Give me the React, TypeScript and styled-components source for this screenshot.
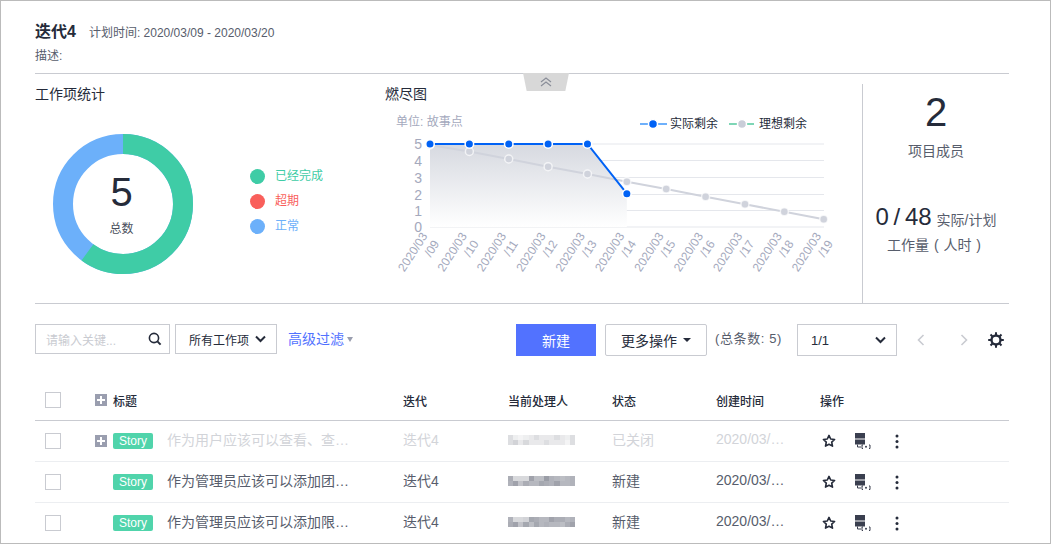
import React from 'react';
import styled, { createGlobalStyle } from 'styled-components';

const GlobalStyle = createGlobalStyle`
  html, body {
    margin: 0;
    padding: 0;
    background: #fff;
    overflow: hidden;
  }
  * {
    box-sizing: border-box;
  }
`;

const FONT = `"Liberation Sans", "Noto Sans CJK SC", sans-serif`;

const Page = styled.div`
  width: 1051px;
  height: 544px;
  overflow: hidden;
  border: 1px solid #bbbbbb;
  padding: 0 41px 0 34px;
  font-family: ${FONT};
  color: #252b3a;
  font-size: 12px;
`;

const Header = styled.header`
  height: 73px;
  padding-top: 20px;
  border-bottom: 1px solid #c9cbd1;
  position: relative;
`;

const TitleRow = styled.div`
  display: flex;
  align-items: baseline;
  gap: 13px;
  height: 22px;
`;

const Title = styled.h1`
  margin: 0;
  font-size: 16px;
  line-height: 22px;
  font-weight: 700;
`;

const Plan = styled.span`
  font-size: 12px;
  color: #575d6c;
`;

const Desc = styled.div`
  margin-top: 5px;
  line-height: 16px;
  color: #575d6c;
`;

const Collapse = styled.div`
  position: absolute;
  left: 488px;
  top: 72px;
  width: 46px;
  height: 18px;
  background: #d8d8d8;
  clip-path: polygon(0 0, 100% 0, 92% 100%, 8% 100%);
  display: flex;
  align-items: center;
  justify-content: center;
`;

const Overview = styled.section`
  display: grid;
  grid-template-columns: 350px 477px 147px;
  height: 230px;
  border-bottom: 1px solid #c9cbd1;
`;

const Panel = styled.div`
  padding-top: 11px;
`;

const PanelTitle = styled.h2`
  margin: 0;
  font-size: 14px;
  line-height: 18px;
  font-weight: 400;
`;

const StatRow = styled.div`
  display: flex;
  align-items: center;
  margin-top: 31px;
  padding-left: 18px;
`;

const Donut = styled.div`
  position: relative;
  width: 140px;
  height: 140px;
`;

const DonutCenter = styled.div`
  position: absolute;
  inset: 0;
  display: flex;
  flex-direction: column;
  align-items: center;
  padding: 38px 3px 0 0;
`;

const DonutValue = styled.div`
  font-size: 40px;
  line-height: 40px;
`;

const DonutLabel = styled.div`
  font-size: 12px;
  line-height: 16px;
  margin-top: 9px;
  color: #4a4f5c;
`;

const Legend = styled.ul`
  list-style: none;
  margin: 0 0 6px 57px;
  padding: 0;
  display: flex;
  flex-direction: column;
  gap: 9px;
`;

const LegendItem = styled.li<{ $color: string }>`
  display: flex;
  align-items: center;
  gap: 10px;
  height: 16px;
  line-height: 16px;
  color: ${(p) => p.$color};

  &::before {
    content: '';
    width: 15px;
    height: 15px;
    border-radius: 50%;
    background: ${(p) => p.$color};
  }
`;

const DrawingSvg = styled.svg`
  display: block;
`;

const Summary = styled.div`
  margin-top: 10px;
  border-left: 1px solid #c9cbd1;
  display: flex;
  flex-direction: column;
  align-items: center;
  text-align: center;
  padding-top: 5px;
`;

const BigNumber = styled.div`
  font-size: 40px;
  line-height: 46px;
`;

const SummaryLabel = styled.div`
  font-size: 14px;
  line-height: 18px;
  margin-top: 7px;
  color: #575d6c;
`;

const Effort = styled.div`
  margin-top: 43px;
  display: flex;
  align-items: baseline;
  gap: 5px;
  font-size: 14px;
  line-height: 28px;
  color: #575d6c;
`;

const EffortValue = styled.span`
  font-size: 24px;
  word-spacing: -2px;
  color: #252b3a;
`;

const EffortLabel = styled.div`
  margin: 2px 4px 0 0;
  font-size: 14px;
  line-height: 18px;
  word-spacing: 1px;
  color: #575d6c;
`;

const Toolbar = styled.div`
  display: flex;
  align-items: flex-start;
  margin-top: 20px;
  height: 32px;
  padding-right: 5px;
`;

const SearchBox = styled.div`
  width: 135px;
  height: 30px;
  border: 1px solid #c9cbd1;
  display: flex;
  align-items: center;
  justify-content: space-between;
  padding: 0 7px 0 10px;
  color: #c9cbd1;
  margin-right: 5px;
`;

const SelectBox = styled.div<{ $width: number; $height: number; $size: number }>`
  width: ${(p) => p.$width}px;
  height: ${(p) => p.$height}px;
  border: 1px solid #c9cbd1;
  display: flex;
  align-items: center;
  justify-content: space-between;
  padding: 0 10px 0 13px;
  font-size: ${(p) => p.$size}px;
  color: #252b3a;
`;

const FilterLink = styled.span`
  margin-left: 11px;
  font-size: 14px;
  line-height: 30px;
  color: #5272ff;
  display: flex;
  align-items: center;
  gap: 3px;

  &::after {
    content: '';
    border: 3.5px solid transparent;
    border-top: 5px solid #9a9eaf;
    border-bottom: 0;
  }
`;

const Spacer = styled.div`
  flex: 1;
`;

const PrimaryButton = styled.button`
  width: 80px;
  height: 32px;
  border: 0;
  padding: 0;
  background: #5272ff;
  color: #fff;
  font: 14px ${FONT};
`;

const MoreButton = styled.button`
  width: 102px;
  height: 32px;
  margin-left: 9px;
  padding: 0;
  border: 1px solid #c9cbd1;
  border-radius: 2px;
  background: #fff;
  color: #252b3a;
  font: 14px ${FONT};
  display: flex;
  align-items: center;
  justify-content: center;
  gap: 6px;

  &::after {
    content: '';
    border: 4px solid transparent;
    border-top: 4px solid #252b3a;
    border-bottom: 0;
  }
`;

const Total = styled.span`
  margin: 0 15px 0 8px;
  font-size: 13px;
  letter-spacing: 0.6px;
  line-height: 30px;
  white-space: nowrap;
  color: #575d6c;
`;

const Pager = styled.div`
  display: flex;
  align-items: center;
  height: 32px;
  margin-left: 20px;
`;

const PagerSlot = styled.span<{ $width: number }>`
  width: ${(p) => p.$width}px;
  display: flex;
`;

const Table = styled.div`
  margin-top: 24px;
`;

const Row = styled.div<{ $head?: boolean; $muted?: boolean }>`
  display: grid;
  grid-template-columns: 60px 308px 105px 104px 104px 104px 189px;
  align-items: center;
  height: 41px;
  border-bottom: 1px solid ${(p) => (p.$head ? '#c9cbd1' : '#eceef1')};
  font-size: ${(p) => (p.$head ? 12 : 14)}px;
  font-weight: ${(p) => (p.$head ? 500 : 400)};
  color: ${(p) => (p.$head ? '#252b3a' : p.$muted ? '#d2d4d9' : '#575d6c')};
`;

const CheckCell = styled.div`
  padding-left: 10px;
  display: flex;
`;

const Check = styled.span`
  width: 16px;
  height: 16px;
  border: 1px solid #c9cbd1;
  background: #fff;
`;

const TitleCell = styled.div`
  display: flex;
  align-items: center;
  min-width: 0;
`;

const ExpandSlot = styled.span`
  width: 18px;
  display: flex;
`;

const Expand = styled.span`
  width: 12px;
  height: 12px;
  background: #9a9eaf;
  position: relative;

  &::before,
  &::after {
    content: '';
    position: absolute;
    background: #fff;
  }

  &::before {
    left: 2px;
    right: 2px;
    top: 5px;
    height: 2px;
  }

  &::after {
    top: 2px;
    bottom: 2px;
    left: 5px;
    width: 2px;
  }
`;

const Tag = styled.span`
  width: 40px;
  height: 16px;
  line-height: 16px;
  border-radius: 2px;
  background: #50d4ab;
  color: #fff;
  font-size: 12px;
  text-align: center;
  margin-right: 14px;
  flex: none;
`;

const RowTitle = styled.span`
  white-space: nowrap;
  margin-bottom: 4px;
`;

const TextCell = styled.div`
  margin-bottom: 4px;
`;

const MosaicCell = styled.div`
  margin-bottom: 2px;
`;

const Actions = styled.div`
  display: flex;
  align-items: center;
  padding-left: 2px;
  color: #252b3a;
`;

const ActionSlot = styled.span<{ $width: number }>`
  width: ${(p) => p.$width}px;
  display: flex;
`;

const dates = ['09', '10', '11', '12', '13', '14', '15', '16', '17', '18', '19'];
const gridY = [144, 160.5, 177.5, 194.5, 210.5, 227];
const X0 = 45;
const STEP = 39.37;
const px = (i: number) => X0 + STEP * i;
const actual = [144, 144, 144, 144, 144, 193.7];
const ideal = [145, 151.5, 159, 166.7, 174, 181.7, 189, 196.7, 204.3, 211.7, 219.3];

const Burndown = () => {
  const y = (v: number) => v - 103;
  const actualPts = actual.map((v, i) => `${px(i)},${y(v)}`).join(' ');
  const idealPts = ideal.map((v, i) => `${px(i)},${y(v)}`).join(' ');
  const area = `${px(0)},${y(227)} ${actualPts} ${px(5)},${y(227)}`;
  return (
    <DrawingSvg width="460" height="200" viewBox="0 0 460 200">
      <defs>
        <linearGradient id="burn" x1="0" y1="0" x2="0" y2="1">
          <stop offset="0" stopColor="#d6d9e0" />
          <stop offset="1" stopColor="#ffffff" />
        </linearGradient>
      </defs>
      <text x="11" y="23" fontSize="12" fill="#a4a9bd">单位: 故事点</text>
      <line x1="255" x2="282" y1="21" y2="21" stroke="#6eb0fb" strokeWidth="2" />
      <circle cx="268" cy="21" r="4.5" fill="#0062f5" stroke="#fff" strokeWidth="1.5" />
      <text x="285" y="25" fontSize="12" fill="#252b3a">实际剩余</text>
      <line x1="344" x2="369" y1="21" y2="21" stroke="#7ed6b6" strokeWidth="2" />
      <circle cx="357" cy="21" r="4.5" fill="#c9cdd8" stroke="#fff" strokeWidth="1.5" />
      <text x="374" y="25" fontSize="12" fill="#252b3a">理想剩余</text>
      {gridY.map((g, i) => (
        <g key={g}>
          <line x1="45" x2="439" y1={y(g)} y2={y(g)} stroke="#e5e7ec" />
          <text x="37" y={y(g) + 5} textAnchor="end" fontSize="14" fill="#a4a9bd">{5 - i}</text>
        </g>
      ))}
      <polygon points={area} fill="url(#burn)" />
      <polyline points={idealPts} fill="none" stroke="#d0d3dc" strokeWidth="2" />
      {ideal.map((v, i) => (
        <circle key={i} cx={px(i)} cy={y(v)} r="4" fill="#d0d3dc" stroke="#fff" strokeOpacity="0.7" strokeWidth="1.5" />
      ))}
      <polyline points={actualPts} fill="none" stroke="#0062f5" strokeWidth="2" />
      {actual.map((v, i) => (
        <circle key={i} cx={px(i)} cy={y(v)} r="4.25" fill="#0062f5" stroke="#fff" strokeWidth="1.5" />
      ))}
      {dates.map((d, i) => (
        <text
          key={d}
          transform={`translate(${px(i) - 2} ${y(236)}) rotate(-57)`}
          fontSize="12"
          fill="#a4a9bd"
          textAnchor="end"
        >
          <tspan x="0" dy="0">2020/03</tspan>
          <tspan x="0" dy="14">/{d}</tspan>
        </text>
      ))}
    </DrawingSvg>
  );
};

const DonutChart = () => (
  <DrawingSvg width="140" height="140" viewBox="0 0 140 140">
    <circle cx="70" cy="70" r="60" fill="none" stroke="#6cb0fa" strokeWidth="20" />
    <circle
      cx="70"
      cy="70"
      r="60"
      fill="none"
      stroke="#3fcca6"
      strokeWidth="20"
      strokeDasharray={`${2 * Math.PI * 60 * 0.6} ${2 * Math.PI * 60}`}
      transform="rotate(-90 70 70)"
    />
  </DrawingSvg>
);

const SearchIcon = () => (
  <svg width="14" height="14" viewBox="0 0 14 14" fill="none" stroke="#252b3a" strokeWidth="1.6">
    <circle cx="6" cy="6" r="4.6" />
    <path d="M9.4 9.4 12.6 12.6" strokeWidth="2" />
  </svg>
);

const Chevron = () => (
  <svg width="11" height="8" viewBox="0 0 11 8" fill="none" stroke="#252b3a" strokeWidth="2">
    <path d="M1 1.5 5.5 6 10 1.5" />
  </svg>
);

const PageArrow = ({ flip }: { flip?: boolean }) => (
  <svg width="8" height="12" viewBox="0 0 8 12" fill="none" stroke="#c9cbd1" strokeWidth="1.6">
    <path d={flip ? 'M1.5 1 6.5 6l-5 5' : 'M6.5 1l-5 5 5 5'} />
  </svg>
);

const Gear = () => (
  <svg width="16" height="16" viewBox="0 0 16 16" fill="none" stroke="#252b3a">
    <circle cx="8" cy="8" r="4.5" strokeWidth="2.4" />
    <path
      d="M8 .2v3M8 12.8v3M.2 8h3M12.8 8h3M2.500 2.500l2 2M11.500 11.500l2 2M13.500 2.500l-2 2M4.500 11.500l-2 2"
      strokeWidth="2"
    />
  </svg>
);

const Star = () => (
  <svg width="14" height="14" viewBox="0 0 14 14" fill="none" stroke="#252b3a" strokeWidth="1.6" strokeLinejoin="round">
    <path d="M7 1.4 8.700 5l3.900.5-2.900 2.700.8 3.900L7 10.200 3.500 12.100l.8-3.900L1.400 5.500 5.300 5z" />
  </svg>
);

const ServerIcon = () => (
  <svg width="16" height="16" viewBox="0 0 16 16">
    <path d="M0 0h10v5.500H0zM0 6.500h10v5H0z" fill="#3a3f4f" />
    <path d="M2.500 11.500v2.500h3.500" fill="none" stroke="#3a3f4f" />
    <path d="M8 12h-1v3.500h1M14 12h1v3.500h-1" fill="none" stroke="#3a3f4f" />
    <circle cx="11" cy="13.700" r="1" fill="#3a3f4f" />
  </svg>
);

const Dots = () => (
  <svg width="4" height="15" viewBox="0 0 4 15" fill="#252b3a">
    <circle cx="2" cy="2" r="1.5" />
    <circle cx="2" cy="7.5" r="1.5" />
    <circle cx="2" cy="13" r="1.5" />
  </svg>
);

// the reference hides the names behind a pixelated block
const Mosaic = ({ cells }: { cells: number[] }) => (
  <DrawingSvg width="67" height="10" viewBox="0 0 13 2" preserveAspectRatio="none" shapeRendering="crispEdges">
    {cells.map((v, i) => (
      <rect key={i} x={i % 13} y={Math.floor(i / 13)} width="1" height="1" fill="#8f929c" opacity={v} />
    ))}
  </DrawingSvg>
);

const rows = [
  {
    title: '作为用户应该可以查看、查…',
    state: '已关闭',
    muted: true,
    expand: true,
    cells: [
      0.3, 0.15, 0.1, 0.15, 0.2, 0.3, 0.2, 0.2, 0.2, 0.3, 0.2, 0.15, 0.3,
      0.3, 0.4, 0.2, 0.35, 0.2, 0.2, 0.2, 0.3, 0.2, 0.2, 0.2, 0.1, 0.3,
    ],
  },
  {
    title: '作为管理员应该可以添加团…',
    state: '新建',
    muted: false,
    expand: false,
    cells: [
      0.75, 0.35, 0.35, 0.35, 0.85, 0.6, 0.6, 0.9, 0.7, 0.65, 0.6, 0.65, 0.7,
      0.7, 0.85, 0.55, 0.75, 0.65, 0.65, 0.8, 0.75, 0.7, 0.85, 0.65, 0.65, 0.7,
    ],
  },
  {
    title: '作为管理员应该可以添加限…',
    state: '新建',
    muted: false,
    expand: false,
    cells: [
      0.7, 0.35, 0.35, 0.4, 0.8, 0.75, 0.65, 0.65, 0.85, 0.75, 0.75, 0.65, 0.7,
      0.75, 0.85, 0.55, 0.8, 0.6, 0.8, 0.65, 0.7, 0.65, 0.65, 0.6, 0.75, 0.85,
    ],
  },
];

const App = () => (
  <Page>
    <GlobalStyle />
    <Header>
      <TitleRow>
        <Title>迭代4</Title>
        <Plan>计划时间: 2020/03/09 - 2020/03/20</Plan>
      </TitleRow>
      <Desc>描述:</Desc>
      <Collapse>
        <svg width="12" height="10" viewBox="0 0 12 10" fill="none" stroke="#8a8e99" strokeWidth="1.2">
          <path d="M1 5l5-4 5 4M1 9l5-4 5 4" />
        </svg>
      </Collapse>
    </Header>
    <Overview>
      <Panel>
        <PanelTitle>工作项统计</PanelTitle>
        <StatRow>
          <Donut>
            <DonutChart />
            <DonutCenter>
              <DonutValue>5</DonutValue>
              <DonutLabel>总数</DonutLabel>
            </DonutCenter>
          </Donut>
          <Legend>
            <LegendItem $color="#3fcca6">已经完成</LegendItem>
            <LegendItem $color="#f95f5b">超期</LegendItem>
            <LegendItem $color="#6cb0fa">正常</LegendItem>
          </Legend>
        </StatRow>
      </Panel>
      <Panel>
        <PanelTitle>燃尽图</PanelTitle>
        <Burndown />
      </Panel>
      <Summary>
        <BigNumber>2</BigNumber>
        <SummaryLabel>项目成员</SummaryLabel>
        <Effort>
          <EffortValue>0 / 48</EffortValue>
          实际/计划
        </Effort>
        <EffortLabel>工作量 ( 人时 )</EffortLabel>
      </Summary>
    </Overview>
    <Toolbar>
      <SearchBox>
        请输入关键...
        <SearchIcon />
      </SearchBox>
      <SelectBox $width={102} $height={30} $size={12}>
        所有工作项
        <Chevron />
      </SelectBox>
      <FilterLink>高级过滤</FilterLink>
      <Spacer />
      <PrimaryButton>新建</PrimaryButton>
      <MoreButton>更多操作</MoreButton>
      <Total>(总条数: 5)</Total>
      <SelectBox $width={100} $height={32} $size={13}>
        1/1
        <Chevron />
      </SelectBox>
      <Pager>
        <PagerSlot $width={43}>
          <PageArrow />
        </PagerSlot>
        <PagerSlot $width={28}>
          <PageArrow flip />
        </PagerSlot>
        <Gear />
      </Pager>
    </Toolbar>
    <Table>
      <Row $head>
        <CheckCell>
          <Check />
        </CheckCell>
        <TitleCell>
          <ExpandSlot>
            <Expand />
          </ExpandSlot>
          标题
        </TitleCell>
        <div>迭代</div>
        <div>当前处理人</div>
        <div>状态</div>
        <div>创建时间</div>
        <div>操作</div>
      </Row>
      {rows.map((r) => (
        <Row key={r.title} $muted={r.muted}>
          <CheckCell>
            <Check />
          </CheckCell>
          <TitleCell>
            <ExpandSlot>{r.expand && <Expand />}</ExpandSlot>
            <Tag>Story</Tag>
            <RowTitle>{r.title}</RowTitle>
          </TitleCell>
          <TextCell>迭代4</TextCell>
          <MosaicCell>
            <Mosaic cells={r.cells} />
          </MosaicCell>
          <TextCell>{r.state}</TextCell>
          <TextCell>2020/03/…</TextCell>
          <Actions>
            <ActionSlot $width={33}>
              <Star />
            </ActionSlot>
            <ActionSlot $width={40}>
              <ServerIcon />
            </ActionSlot>
            <Dots />
          </Actions>
        </Row>
      ))}
    </Table>
  </Page>
);

export default App;
